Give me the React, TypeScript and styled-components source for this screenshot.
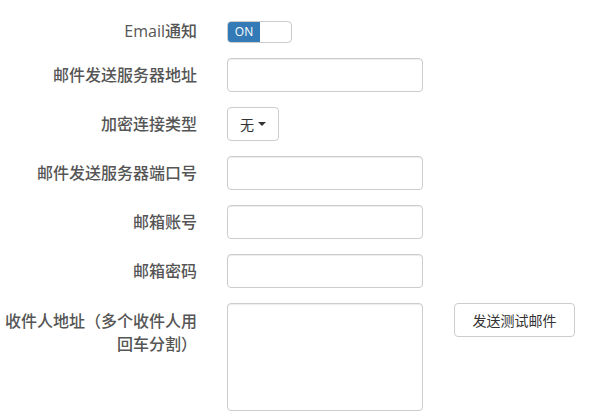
import styled, { createGlobalStyle } from 'styled-components';

const GlobalStyle = createGlobalStyle`
  body {
    margin: 0;
    background: #fff;
    font-family: "Open Sans", "Noto Sans CJK SC", sans-serif;
    color: #333;
  }
`;

const Form = styled.form`
  padding-top: 20px;
  display: flex;
  flex-direction: column;
  gap: 15px;
`;

const Row = styled.div<{ $top?: boolean }>`
  display: grid;
  grid-template-columns: 197px 196px auto;
  column-gap: 30px;
  align-items: ${({ $top }) => ($top ? 'start' : 'center')};
`;

const Label = styled.label<{ $multi?: boolean }>`
  text-align: right;
  font-size: 16px;
  font-weight: 500;
  color: #555;
  line-height: 23px;
  padding-top: ${({ $multi }) => ($multi ? '7px' : '0')};
`;

const Input = styled.input`
  box-sizing: border-box;
  width: 196px;
  height: 34px;
  border: 1px solid #ccc;
  border-radius: 4px;
  box-shadow: inset 0 1px 1px rgba(0, 0, 0, 0.075);
  padding: 6px 12px;
  font-size: 14px;
  outline: none;
`;

const TextArea = styled.textarea`
  box-sizing: border-box;
  width: 196px;
  height: 108px;
  border: 1px solid #ccc;
  border-radius: 4px;
  box-shadow: inset 0 1px 1px rgba(0, 0, 0, 0.075);
  padding: 6px 12px;
  resize: none;
  outline: none;
  display: block;
`;

const Switch = styled.div`
  box-sizing: border-box;
  width: 65px;
  height: 22px;
  border: 1px solid #ccc;
  border-radius: 4px;
  overflow: hidden;
  display: flex;
`;

const SwitchOn = styled.span`
  width: 32px;
  background: #337ab7;
  color: #fff;
  font-size: 12px;
  line-height: 20px;
  text-align: center;
`;

const Btn = styled.button`
  box-sizing: border-box;
  height: 34px;
  border: 1px solid #ccc;
  border-radius: 4px;
  background: #fff;
  color: #333;
  font-family: "Noto Sans CJK SC", sans-serif;
  font-size: 14px;
  padding: 0 12px;
  display: inline-flex;
  align-items: center;
  justify-self: start;
  gap: 4px;
`;

const Caret = styled.span`
  width: 0;
  height: 0;
  border-top: 4px solid #333;
  border-left: 4px solid transparent;
  border-right: 4px solid transparent;
`;

const TestBtn = styled(Btn)`
  width: 121px;
  justify-content: center;
  margin-left: 1px;
`;

export default function App() {
  return (
    <>
      <GlobalStyle />
      <Form>
        <Row>
          <Label>Email通知</Label>
          <Switch>
            <SwitchOn>ON</SwitchOn>
          </Switch>
        </Row>
        <Row>
          <Label>邮件发送服务器地址</Label>
          <Input />
        </Row>
        <Row>
          <Label>加密连接类型</Label>
          <Btn type="button">
            无<Caret />
          </Btn>
        </Row>
        <Row>
          <Label>邮件发送服务器端口号</Label>
          <Input />
        </Row>
        <Row>
          <Label>邮箱账号</Label>
          <Input />
        </Row>
        <Row>
          <Label>邮箱密码</Label>
          <Input type="password" />
        </Row>
        <Row $top>
          <Label $multi>收件人地址（多个收件人用回车分割）</Label>
          <TextArea />
          <TestBtn type="button">发送测试邮件</TestBtn>
        </Row>
      </Form>
    </>
  );
}
